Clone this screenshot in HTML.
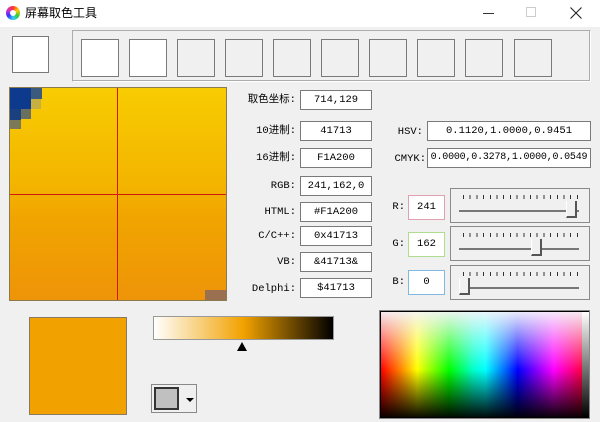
<!DOCTYPE html>
<html><head><meta charset="utf-8"><style>
*{margin:0;padding:0;box-sizing:border-box}
body{width:600px;height:422px;background:#f0f0f0;position:relative;overflow:hidden;font-family:"Liberation Mono","Noto Sans CJK SC",monospace;font-size:10.5px;color:#000}
.a{position:absolute}
.tb{left:0;top:0;width:600px;height:27px;background:#fff}
.sw{position:absolute;width:38px;height:38px;border:1px solid #7a7a7a;background:#f0f0f0}
.lbl{position:absolute;text-align:right;width:90px;font-family:"Liberation Mono","Noto Sans CJK SC",monospace;font-size:10.5px;line-height:20px}
.in{position:absolute;background:#fff;border:1px solid #7a7a7a;text-align:center;line-height:18px;height:20px;font-family:"Liberation Mono",monospace;font-size:10.5px}
.sl{position:absolute;left:450px;width:140px;height:35px;border:1px solid #8a8a8a;background:#f0f0f0}
.ticks{position:absolute;left:12px;top:6px;width:115px;height:4px;background:repeating-linear-gradient(90deg,#333 0 1px,transparent 1px 6.7px)}
.trk{position:absolute;left:8px;top:21px;width:120px;height:2px;background:#777}
.th{position:absolute;top:12px;width:11px;height:17px;background:#f0f0f0;border-right:2px solid #555;border-bottom:2px solid #555;border-left:1px solid #fff}
</style></head><body>
<div class="a tb"></div>
<div class="a" style="left:6px;top:6px;width:14px;height:14px;border-radius:50%;background:conic-gradient(#f33,#fc0,#3c3,#3cf,#33f,#c3c,#f33)"></div>
<div class="a" style="left:10px;top:10px;width:6px;height:6px;border-radius:50%;background:#fff"></div>
<div class="a" style="left:25px;top:5px;font-family:'Noto Sans CJK SC',sans-serif;font-size:12px;line-height:16px">屏幕取色工具</div>
<div class="a" style="left:483px;top:13px;width:11px;height:1px;background:#333"></div>
<div class="a" style="left:526px;top:7px;width:10px;height:10px;border:1px solid #ccc"></div>
<svg class="a" style="left:570px;top:7px" width="12" height="12"><path d="M0.5 0.5L11.5 11.5M11.5 0.5L0.5 11.5" stroke="#222" stroke-width="1.1"/></svg>

<div class="sw" style="left:12px;top:36px;width:37px;height:37px;background:#fff"></div>
<div class="a" style="left:72px;top:30px;width:519px;height:52px;border:1px solid #adadad;border-right-color:#fff;border-bottom-color:#fff;box-shadow:inset -1px -1px 0 #adadad"></div>
<div class="sw" style="left:81px;top:39px;background:#fff"></div>
<div class="sw" style="left:129px;top:39px;background:#fff"></div>
<div class="sw" style="left:177px;top:39px"></div>
<div class="sw" style="left:225px;top:39px"></div>
<div class="sw" style="left:273px;top:39px"></div>
<div class="sw" style="left:321px;top:39px"></div>
<div class="sw" style="left:369px;top:39px"></div>
<div class="sw" style="left:417px;top:39px"></div>
<div class="sw" style="left:465px;top:39px"></div>
<div class="sw" style="left:514px;top:39px"></div>

<div class="a" style="left:9px;top:87px;width:218px;height:214px;border:1px solid #8a7a50;background:linear-gradient(180deg,#f8cc02 0%,#f3b500 45%,#f1a500 60%,#ee9408 100%)"></div>
<div class="a" style="left:10px;top:88px;width:21px;height:21px;background:#0d3a8c"></div>
<div class="a" style="left:31px;top:88px;width:11px;height:11px;background:#3c5a7e"></div>
<div class="a" style="left:10px;top:109px;width:11px;height:11px;background:#1a4080"></div>
<div class="a" style="left:21px;top:109px;width:10px;height:10px;background:#6a7060"></div>
<div class="a" style="left:10px;top:120px;width:11px;height:9px;background:#7a7a58"></div>
<div class="a" style="left:31px;top:99px;width:10px;height:10px;background:#c8b040"></div>
<div class="a" style="left:205px;top:290px;width:21px;height:10px;background:#9a7050"></div>
<div class="a" style="left:117px;top:88px;width:1px;height:212px;background:#d01810"></div>
<div class="a" style="left:10px;top:194px;width:216px;height:1px;background:#d01810"></div>

<div class="lbl" style="left:206px;top:90px">取色坐标:</div><div class="in" style="left:300px;top:90px;width:72px;text-align:left;padding-left:13px">714,129</div>
<div class="lbl" style="left:206px;top:121px">10进制:</div><div class="in" style="left:300px;top:121px;width:72px">41713</div>
<div class="lbl" style="left:206px;top:148px">16进制:</div><div class="in" style="left:300px;top:148px;width:72px">F1A200</div>
<div class="lbl" style="left:206px;top:176px">RGB:</div><div class="in" style="left:300px;top:176px;width:72px">241,162,0</div>
<div class="lbl" style="left:206px;top:202px">HTML:</div><div class="in" style="left:300px;top:202px;width:72px">#F1A200</div>
<div class="lbl" style="left:206px;top:226px">C/C++:</div><div class="in" style="left:300px;top:226px;width:72px">0x41713</div>
<div class="lbl" style="left:206px;top:252px">VB:</div><div class="in" style="left:300px;top:252px;width:72px">&amp;41713&amp;</div>
<div class="lbl" style="left:206px;top:279px">Delphi:</div><div class="in" style="left:300px;top:278px;width:72px">$41713</div>

<div class="lbl" style="left:333px;top:122px">HSV:</div><div class="in" style="left:427px;top:121px;width:164px">0.1120,1.0000,0.9451</div>
<div class="lbl" style="left:336px;top:149px">CMYK:</div><div class="in" style="left:427px;top:148px;width:164px;font-size:10px;letter-spacing:-0.2px">0.0000,0.3278,1.0000,0.0549</div>

<div class="lbl" style="left:315px;top:197px">R:</div><div class="in" style="left:408px;top:195px;width:37px;height:25px;line-height:23px;border-color:#e0a0b0">241</div>
<div class="lbl" style="left:315px;top:234px">G:</div><div class="in" style="left:408px;top:232px;width:37px;height:25px;line-height:23px;border-color:#b0dc90">162</div>
<div class="lbl" style="left:315px;top:272px">B:</div><div class="in" style="left:408px;top:270px;width:37px;height:25px;line-height:23px;border-color:#80b8e0">0</div>

<div class="sl" style="top:188px"><div class="ticks"></div><div class="trk"></div><div class="th" style="left:115px"></div></div>
<div class="sl" style="top:226px"><div class="ticks"></div><div class="trk"></div><div class="th" style="left:80px"></div></div>
<div class="sl" style="top:265px"><div class="ticks"></div><div class="trk"></div><div class="th" style="left:8px"></div></div>

<div class="a" style="left:29px;top:317px;width:98px;height:98px;background:#f1a200;border:1px solid #8a7a60"></div>
<div class="a" style="left:153px;top:316px;width:181px;height:24px;border:1px solid #999;background:linear-gradient(90deg,#fff 0%,#f1a200 50%,#000 100%)"></div>
<div class="a" style="left:237px;top:342px;width:0;height:0;border-left:5px solid transparent;border-right:5px solid transparent;border-bottom:9px solid #000"></div>
<div class="a" style="left:151px;top:384px;width:46px;height:29px;border:1px solid #888;background:#f0f0f0"></div>
<div class="a" style="left:154px;top:387px;width:25px;height:23px;border:2px solid #333;background:#c0c0c0"></div>
<div class="a" style="left:186px;top:398px;width:0;height:0;border-left:4px solid transparent;border-right:4px solid transparent;border-top:4px solid #000"></div>

<div class="a" style="left:379px;top:310px;width:211px;height:109px;border:1px solid #888;background:#000;overflow:hidden">
<div class="a" style="left:1px;top:1px;width:201px;height:105px;background:linear-gradient(180deg,rgba(245,245,250,.95) 0%,rgba(255,255,255,.4) 30%,rgba(255,255,255,0) 55%,rgba(0,0,0,0) 55%,rgba(0,0,0,.95) 100%),linear-gradient(90deg,#f00 0%,#f80 10%,#ff0 18%,#0f0 34%,#0fc 46%,#0ff 52%,#06f 62%,#00f 68%,#f0f 86%,#f04 100%)"></div>
<div class="a" style="left:202px;top:1px;width:7px;height:105px;background:linear-gradient(180deg,#fff,#000)"></div>
</div>
</body></html>
